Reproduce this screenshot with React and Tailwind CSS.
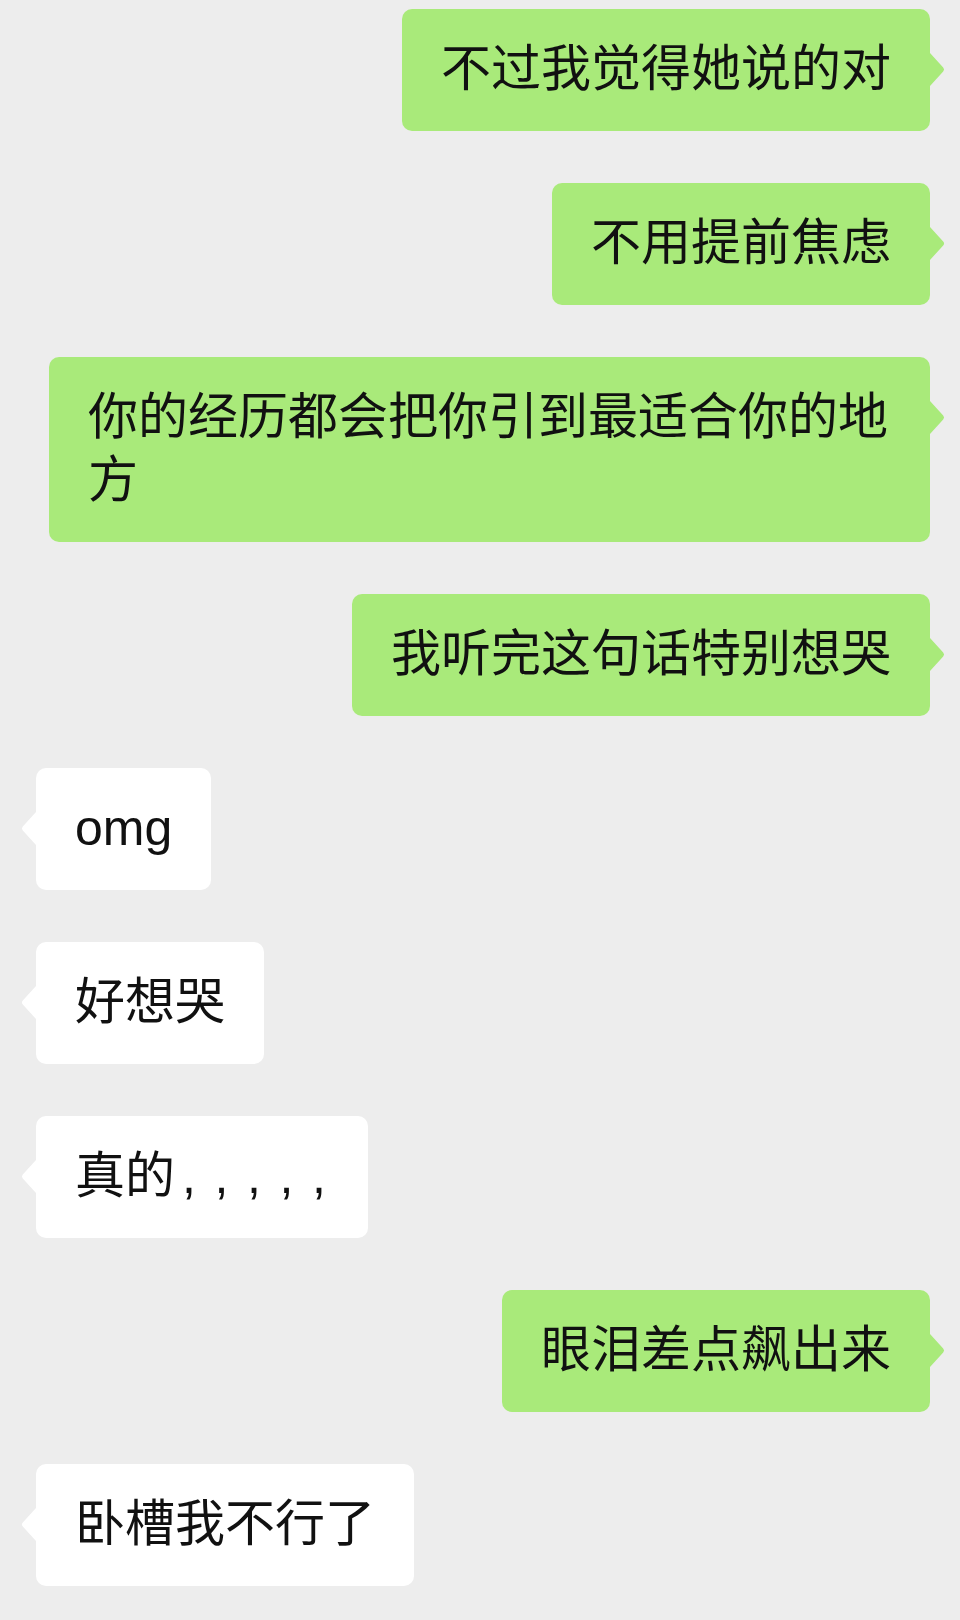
import React from 'react'

const messages = [
  { me: true, text: '不过我觉得她说的对' },
  { me: true, text: '不用提前焦虑' },
  { me: true, text: '你的经历都会把你引到最适合你的地方' },
  { me: true, text: '我听完这句话特别想哭' },
  { me: false, text: 'omg' },
  { me: false, text: '好想哭' },
  { me: false, text: '真的', commas: true },
  { me: true, text: '眼泪差点飙出来' },
  { me: false, text: '卧槽我不行了' },
]

// little pointer on the side of each bubble
const Tail = ({ me }) => (
  <svg
    className={me ? 'absolute top-[44px] -right-[15px]' : 'absolute top-[44px] -left-[15px]'}
    width="15"
    height="33"
    viewBox="0 0 15 33"
  >
    {me ? (
      <path d="M0 0 L13.2 14.6 Q15 16.5 13.2 18.4 L0 33 Z" fill="#a9ea7a" />
    ) : (
      <path d="M15 0 L1.8 14.6 Q0 16.5 1.8 18.4 L15 33 Z" fill="#ffffff" />
    )}
  </svg>
)

const Bubble = ({ msg }) => (
  <div className={msg.me ? 'flex justify-end pr-[30px]' : 'flex justify-start pl-[36px]'}>
    <div
      className={
        'relative max-w-[881px] rounded-[10px] px-[39px] pt-[29px] pb-[30px] text-[50px] leading-[63px] text-[#111111] ' +
        (msg.me ? 'bg-[#a9ea7a]' : 'bg-white')
      }
    >
      <Tail me={msg.me} />
      {msg.text}
      {msg.commas && (
        <span className="ml-[7px] mr-[3px] [word-spacing:4.7px]">, , , , ,</span>
      )}
    </div>
  </div>
)

export default function App() {
  return (
    <div
      className="min-h-[1620px] w-[960px] bg-[#ededed] pt-[9px] pb-[34px] flex flex-col gap-[52px]"
      style={{ fontFamily: '"Liberation Sans", "Noto Sans CJK SC", sans-serif' }}
    >
      {messages.map((m, i) => (
        <Bubble key={i} msg={m} />
      ))}
    </div>
  )
}
